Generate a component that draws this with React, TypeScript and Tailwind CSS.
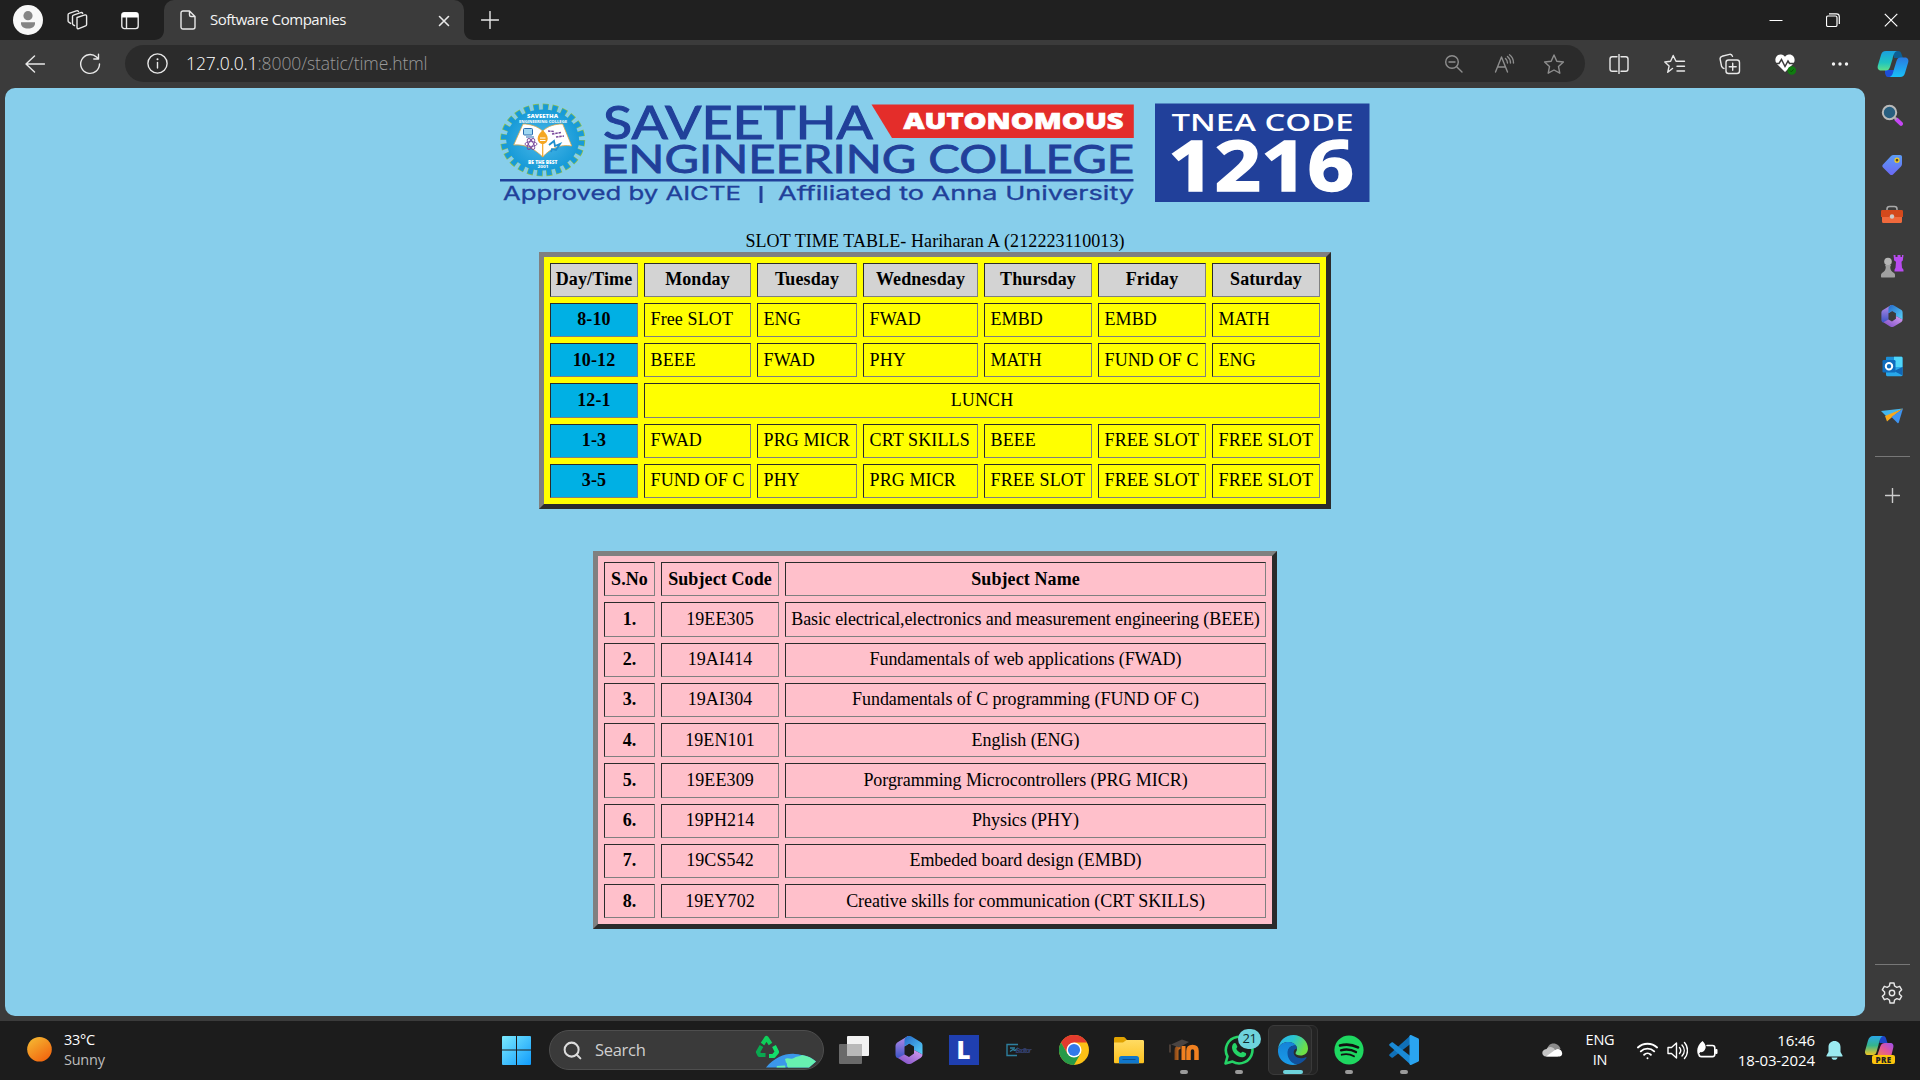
import React from "react";
import { Wifi, Search } from "lucide-react";

const ui = "font-['Open_Sans','Noto_Sans',sans-serif]";

type Box = { w: number; h: number; vb?: string; className?: string; children: React.ReactNode };
const Svg = ({ w, h, vb, className, children }: Box) => (
  <svg width={w} height={h} viewBox={vb ?? `0 0 ${w} ${h}`} fill="none" className={className ?? "block shrink-0"}>
    {children}
  </svg>
);

const line = { stroke: "#e8e8e8", strokeWidth: 1.4, strokeLinecap: "round" as const, strokeLinejoin: "round" as const };
const dim = { ...line, stroke: "#8e8e8e" };

const STAR = "M11 2 L13.8 8.2 L20.4 9 L15.5 13.6 L16.8 20.2 L11 17 L5.2 20.2 L6.5 13.6 L1.6 9 L8.2 8.2 Z";

/* ---------- browser chrome ---------- */

function TitleBar() {
  return (
    <div className="flex h-10 shrink-0 items-stretch bg-[#202020]">
      <div className="flex w-[164px] items-center pl-[13px]">
        <Svg w={30} h={30}>
          <circle cx="15" cy="15" r="15" fill="#f8f8f8" />
          <circle cx="15" cy="10.7" r="4.6" fill="#858585" />
          <path d="M8 17.2h14v1.3c0 3-3 5-7 5s-7-2-7-5z" fill="#858585" />
        </Svg>
        <Svg w={22} h={22} className="ml-[23px] block shrink-0">
          <g {...line}>
            <path d="M11 8.5l8-2.6c.8-.2 1.6.2 1.6 1.2v8.4c0 .7-.4 1.1-1 1.4l-6.8 2.8c-1 .3-1.8-.2-1.8-1.2z" />
            <path d="M8.6 16.6l-1.4-.8c-.5-.3-.7-.7-.7-1.3V7.6c0-.7.4-1.2 1-1.4l7.2-2.6c.8-.3 1.6 0 2 .8" />
            <path d="M4.6 14.4l-1.8-1.2c-.5-.3-.7-.8-.7-1.3V5.8c0-.7.4-1.2 1-1.4l7.2-2.6c.9-.3 1.8 0 2.2.8" />
          </g>
        </Svg>
        <Svg w={18} h={19} className="ml-[33px] block shrink-0">
          <rect x="0.8" y="1.6" width="16.4" height="16" rx="2.5" {...line} />
          <path d="M.8 6.4V4c0-1.6 1-2.4 2.5-2.4h11.4c1.6 0 2.5.8 2.5 2.4v2.4z" fill="#fff" />
          <path d="M5.5 6.4v11" {...line} />
        </Svg>
      </div>
      <div className="relative flex w-[300px] items-center rounded-t-[10px] bg-[#3b3b3b] pl-4">
        <Svg w={10} h={10} className="absolute bottom-0 -left-[10px]"><path d="M10 0v10H0C6 10 10 6 10 0z" fill="#3b3b3b" /></Svg>
        <Svg w={10} h={10} className="absolute bottom-0 -right-[10px]"><path d="M0 0v10h10C4 10 0 6 0 0z" fill="#3b3b3b" /></Svg>
        <Svg w={16} h={20}>
          <path d="M1 3c0-1.3.8-2 2-2h6.5L15 6.500V17c0 1.300-.8 2-2 2H3c-1.200 0-2-.7-2-2zM9.500 1v4c0 1 .6 1.500 1.500 1.500h4" {...line} />
        </Svg>
        <span className={`mb-[2px] ml-[14px] w-[219px] whitespace-nowrap text-[15px] leading-5 tracking-[-0.48px] text-[#f4f4f4] ${ui}`}>Software Companies</span>
        <Svg w={12} h={12} className="ml-[9px] mt-px block shrink-0"><path d="M1.500 1.500l9 9m0-9l-9 9" {...line} strokeWidth={1.600} /></Svg>
      </div>
      <div className="flex flex-1 items-center pl-[17px]">
        <Svg w={18} h={18}><path d="M9 .5v17M.5 9h17" {...line} /></Svg>
      </div>
      <div className="flex w-[158px] items-center">
        <Svg w={14} h={14} className="mb-px ml-[7px] block shrink-0"><path d="M.5 7.500h13" stroke="#fff" /></Svg>
        <Svg w={14} h={14} className="mb-px ml-[43px] block shrink-0">
          <rect x=".5" y="3" width="10.500" height="10.500" rx="1.500" stroke="#fff" strokeWidth="1.200" />
          <path d="M3 .8h7.500c1.800 0 2.800 1 2.800 2.800V11" stroke="#fff" strokeWidth="1.200" />
        </Svg>
        <Svg w={14} h={14} className="mb-px ml-[44px] block shrink-0"><path d="M.8.800l12.500 12.500m0-12.500L.8 13.300" stroke="#fff" strokeWidth="1.200" /></Svg>
      </div>
    </div>
  );
}

function Toolbar() {
  return (
    <div className="flex h-12 shrink-0 bg-[#3b3b3b] pt-[5px]">
      <div className="flex h-[37px] w-[125px] items-center pl-[25px]">
        <Svg w={20} h={18}><path d="M9.500 1L1 9l8.500 8M1 9h18.500" {...line} /></Svg>
        <Svg w={22} h={22} className="ml-[34px] mt-px block shrink-0">
          <path d="M20.500 11a9.400 9.400 0 1 1-3-6.900L19.500 6M19.500 1.300V6h-4.700" {...line} />
        </Svg>
      </div>
      <div className="flex h-[37px] w-[1460px] items-center rounded-full bg-[#2b2b2b] pl-[22px]">
        <Svg w={21} h={21}>
          <circle cx="10.500" cy="10.500" r="9.600" {...line} />
          <path d="M10.500 9.500v5.500" {...line} />
          <circle cx="10.500" cy="6.300" r="1" fill="#eee" />
        </Svg>
        <span className={`mb-px ml-[18px] w-[1259px] whitespace-nowrap text-[17.500px] leading-6 tracking-[-0.1px] text-white ${ui} font-light`}>
          127.0.0.1<span className="text-[#9a9a9a]">:8000/static/time.html</span>
        </span>
        <Svg w={18} h={18}>
          <g {...dim}><circle cx="7" cy="7" r="6.300" /><path d="M11.700 11.700L17 17M4 7h6" /></g>
        </Svg>
        <Svg w={22} h={20} className="ml-[31px] block shrink-0">
          <g {...dim}><path d="M1.500 18L7.500 3l6 15M3.600 13h7.800M11.500 4.500c1.300 1.200 2 2.700 2 4.500M13.500 2.500c1.900 1.600 3 3.600 3 6.500M15.500.8C18 2.700 19.500 5.500 19.500 9" /></g>
        </Svg>
        <Svg w={22} h={22} className="ml-[27px] block shrink-0"><path d={STAR} {...dim} /></Svg>
      </div>
      <div className="flex h-[37px] w-[280px] items-center pl-[24px]">
        <Svg w={20} h={20}>
          <path d="M8 2.800H3.200C1.800 2.800 1 3.600 1 5v10c0 1.400.8 2.200 2.200 2.200H8M12 2.800h4.800c1.400 0 2.200.8 2.200 2.200v10c0 1.400-.8 2.200-2.200 2.200H12M10 .5v19" {...line} />
        </Svg>
        <Svg w={22} h={22} className="ml-[35px] block shrink-0">
          <path d="M8.500 15.500l-4.800 3.800 1.400-6.200L.8 9l5.800-.8L9.200 2.500 12 8.200h8.500M13 13.200h7.500M13 18h7.500" {...line} />
        </Svg>
        <Svg w={22} h={22} className="ml-[33px] block shrink-0">
          <g {...line}>
            <path d="M5 15.500c-1.400-.2-2-.9-2.400-2.200L1.200 6.500C.8 4.800 1.400 3.800 3 3.300l7.500-1.900c1.500-.3 2.500.3 3 2" />
            <rect x="7" y="7" width="13.500" height="13.500" rx="2.500" />
            <path d="M13.700 10.200v7M10.200 13.700h7" />
          </g>
        </Svg>
        <Svg w={22} h={22} className="ml-[33px] block shrink-0">
          <path d="M11 19L2.500 10.500C-.5 6 3 1 7 1.500c2 .2 3.200 1.200 4 2.200.8-1 2-2 4-2.200 4-.5 7.500 4.500 4.500 9z" fill="#fff" />
          <path d="M0 10.500h5l2.500-4 3.500 7 3-5.500 1.500 2.500H22" stroke="#3b3b3b" strokeWidth="1.500" />
          <circle cx="17.800" cy="17.500" r="4.300" fill="#107c10" />
          <path d="M16 17.500l1.300 1.300 2.300-2.400" stroke="#0a4d0a" />
        </Svg>
        <Svg w={18} h={6} className="ml-[35px] block shrink-0">
          <g fill="#f2f2f2"><circle cx="2.500" cy="3" r="1.700" /><circle cx="9" cy="3" r="1.700" /><circle cx="15.500" cy="3" r="1.700" /></g>
        </Svg>
        <Svg w={32} h={28} className="ml-[28px] block shrink-0">
          <defs>
            <linearGradient id="cpA" x1="0" y1="0" x2="0" y2="1"><stop stopColor="#1aa0e0" /><stop offset=".6" stopColor="#20c4c0" /><stop offset="1" stopColor="#5fe08a" /></linearGradient>
            <linearGradient id="cpB" x1="0" y1="0" x2="0" y2="1"><stop stopColor="#2a7ae0" /><stop offset="1" stopColor="#19c0f8" /></linearGradient>
          </defs>
          <path d="M16 1h5c2 0 3 1 3.500 3L26 8h-9z" fill="#0d5f94" />
          <path d="M8 20h10l-3 7h-4c-2 0-2.500-2-3-4z" fill="#1d4fd8" />
          <path d="M9 1h11c-3 1-3.500 4-4.500 8l-2.500 8c-.8 2.500-2 3.500-4 3.500H4C1 20.500 0 18 1 15L4 5c.8-2.700 2-4 5-4z" fill="url(#cpA)" />
          <path d="M23 27H12.500c3-1 3.500-4 4.500-8l2.500-8c.8-2.500 2-3.500 4-3.500H28c3 0 4 2.500 3 5.500l-3 10c-.8 2.700-2 4-5 4z" fill="url(#cpB)" />
        </Svg>
      </div>
    </div>
  );
}

const M365 = ({ size, id }: { size: number; id: string }) => (
  <Svg w={size} h={size} vb="0 0 28 28">
    <defs>
      <linearGradient id={id + "a"} x1="0" y1="0" x2="0" y2="1"><stop stopColor="#b98be8" /><stop offset="1" stopColor="#3a53c5" /></linearGradient>
      <linearGradient id={id + "b"} x1="0" y1="0" x2="1" y2="1"><stop stopColor="#2468c8" /><stop offset="1" stopColor="#58d3fb" /></linearGradient>
      <linearGradient id={id + "c"} x1="0" y1="1" x2="1" y2="0"><stop stopColor="#7a4ac4" /><stop offset="1" stopColor="#d7a0f2" /></linearGradient>
    </defs>
    <path d="M13 0L3 6C1.500 7 .5 8 .5 10v9c0 2.500 2.500 4 4.500 3l4.500-3V10.500L16 6.500z" fill={`url(#${id}a)`} />
    <path d="M12 .5c1.500-.8 3-.8 4.500 0L25.500 6c1.500.9 2 2 2 3.500v9l-8.500-4.500v-3.500L14 7.500l-4.500 3V4c0-1.500 1-2.700 2.500-3.500z" fill={`url(#${id}b)`} />
    <path d="M3 22l6.500-3.500 4.500 2.500 5-3.500V14l8.500 4.500c0 1.500-.8 2.700-2 3.500l-9 5.500c-1.500.8-3.500.8-5 0z" fill={`url(#${id}c)`} />
  </Svg>
);

const SideSlot = ({ children }: { children: React.ReactNode }) => (
  <div className="flex h-[50.200px] w-full shrink-0 items-center justify-center">{children}</div>
);

function Sidebar() {
  return (
    <div className="flex w-[55px] shrink-0 flex-col items-center bg-[#3b3b3b] pt-[2px] pr-px">
      <SideSlot>
        <Svg w={22} h={22}>
          <path d="M15.500 15.500l4.500 4.300" stroke="#c546f5" strokeWidth="4" strokeLinecap="round" />
          <path d="M13 13l2.500 2.500" stroke="#aaa" strokeWidth="2" />
          <circle cx="8.500" cy="8.500" r="6.700" fill="#285f80" stroke="#b9b9b9" strokeWidth="2" />
        </Svg>
      </SideSlot>
      <SideSlot>
        <Svg w={22} h={22}>
          <defs><linearGradient id="tag" x1="0" y1="0" x2="0" y2="1"><stop stopColor="#5b9cf5" /><stop offset="1" stopColor="#6b68f5" /></linearGradient></defs>
          <path d="M12.500 1H19c1.300 0 2 .7 2 2v7c0 1-.3 1.700-1 2.400l-8 8c-1 .9-2 .9-3 0l-7-7c-.9-1-.9-2 0-3L10 2c.7-.7 1.500-1 2.500-1z" fill="url(#tag)" />
          <circle cx="16" cy="6.200" r="2" fill="#5a4a20" stroke="#f5d020" strokeWidth="1.200" />
        </Svg>
      </SideSlot>
      <SideSlot>
        <Svg w={24} h={20}>
          <path d="M7 6V4c0-1.700.8-2.500 2.500-2.500h5C16.200 1.500 17 2.300 17 4v2" stroke="#aaa" strokeWidth="1.500" />
          <path d="M1 6.500C1 5.500 1.500 5 2.500 5h19c1 0 1.500.5 1.500 1.500V12H1z" fill="#d4491c" />
          <path d="M2 12h20v4.500c0 1-.8 1.500-1.800 1.500H3.800c-1 0-1.800-.5-1.800-1.500z" fill="#f0693c" />
          <circle cx="12" cy="11.500" r="2.200" fill="#ccc" />
        </Svg>
      </SideSlot>
      <SideSlot>
        <Svg w={24} h={24}>
          <path d="M13.500 1h2v2h2V1h3v2h1.500V1h1.500l-.7 5.500-1.300 1.300.5 6 1.500 2v1.700h-9v-1.700l1-2 .5-6L14.200 6.500z" fill="#b84bf0" />
          <circle cx="8" cy="7.500" r="3.800" fill="#b5b5b5" />
          <path d="M5 11h6l-.8 2c.2 3 1 4.500 3.800 6 .8.500 1 1.200 1 2v1.500c0 .6-.3 1-1 1H2c-.7 0-1-.4-1-1V21c0-.8.3-1.500 1-2 2.800-1.500 3.600-3 3.800-6z" fill="#a0a0a0" />
        </Svg>
      </SideSlot>
      <SideSlot><M365 size={22} id="s" /></SideSlot>
      <SideSlot>
        <Svg w={21} h={21}>
          <path d="M4 2c0-.8.5-1.200 1.200-1.200h14c.7 0 1.300.4 1.300 1.200v9H4z" fill="#1b8fd8" />
          <path d="M12 .8h7.200c.7 0 1.300.4 1.300 1.200v9H12z" fill="#4fd6fa" />
          <path d="M4 18.800V11h16.500v8c0 .8-.5 1.200-1.300 1.200H5.200C4.500 20.200 4 19.500 4 18.800z" fill="#28a8ea" />
          <path d="M20.500 11v8.500L12 15z" fill="#1066b5" />
          <rect x=".5" y="4" width="13" height="12.500" rx="1.200" fill="#0f6cbd" />
          <circle cx="7" cy="10.300" r="3.200" stroke="#fff" strokeWidth="2" />
        </Svg>
      </SideSlot>
      <SideSlot>
        <Svg w={22} h={18}>
          <path d="M0 4l22-2.500L5.500 9.500z" fill="#43b6ee" />
          <path d="M4 9l18-7.500-12 9.500-4 3.500z" fill="#f7a81b" />
          <path d="M22 1.500L10.500 10l6 6c.5.400 1 .2 1.300-.4z" fill="#3f94f0" />
        </Svg>
      </SideSlot>
      <div className="mt-[15px] h-px w-[35px] bg-[#777]" />
      <Svg w={15} h={15} className="mt-[31px] block shrink-0"><path d="M7.500.5v14M.5 7.500h14" {...line} stroke="#ccc" /></Svg>
      <div className="flex-1" />
      <div className="h-px w-[35px] bg-[#777]" />
      <Svg w={22} h={22} className="mt-[17px] mb-[12px] block shrink-0">
        <path d="M9 1h4l.6 3 2.200 1.300 2.900-1 2 3.500L18.400 10v2.200l2.300 2-2 3.500-2.900-1-2.200 1.300-.6 3H9l-.6-3-2.200-1.300-2.900 1-2-3.500 2.300-2V10l-2.300-2.200 2-3.500 2.900 1L8.400 4z" {...line} />
        <circle cx="11" cy="11" r="2.700" {...line} />
      </Svg>
    </div>
  );
}

/* ---------- page ---------- */

function Banner() {
  return (
    <svg width="890" height="143" viewBox="490 88 890 143" className="block shrink-0">
      <defs>
        <radialGradient id="gearFill"><stop stopColor="#4db8e8" /><stop offset="1" stopColor="#189bd8" /></radialGradient>
      </defs>
      <g>
        <ellipse cx="542.700" cy="140" rx="38.500" ry="32.500" fill="none" stroke="#93c04a" strokeWidth="8" pathLength={96} strokeDasharray="2.500 1.500" />
        <ellipse cx="542.700" cy="140" rx="38" ry="32" fill="none" stroke="#189bd8" strokeWidth="7.500" pathLength={96} strokeDasharray="2.100 1.900" strokeDashoffset="-.2" />
        <ellipse cx="542.700" cy="140" rx="36.500" ry="30.500" fill="url(#gearFill)" />
        <text x="527" y="117.500" textLength="31" lengthAdjust="spacingAndGlyphs" fontSize="5" fontWeight="800" fill="#fff" fontFamily="Open Sans">SAVEETHA</text>
        <text x="519" y="123" textLength="48" lengthAdjust="spacingAndGlyphs" fontSize="3.500" fontWeight="700" fill="#fff" fontFamily="Open Sans">ENGINEERING COLLEGE</text>
        <path d="M523 124c7 0 14 2 19.700 7 5.500-5 12-7 20-7l9 22c-11-2-21 2-29 11-8-8-17-13-29-12z" fill="#fff" stroke="#e0a94a" strokeWidth=".8" />
        <path d="M542.700 131v26" stroke="#f5a623" strokeWidth="1.200" />
        <path d="M542.700 130c3 3 5 5.500 5 8.500s-2 5.500-5 5.500-5-2.500-5-5.500 2-5.500 5-8.500z" fill="#f5a623" />
        <path d="M540 138h5.500M540 140.500h5.500" stroke="#fff" />
        <rect x="523.500" y="128.500" width="9" height="6.500" rx="1" fill="#9fd8f2" stroke="#2b6cb0" />
        <path d="M526 137h8" stroke="#2b6cb0" strokeWidth="1.200" />
        <g fill="none" stroke="#7a4a9c" strokeWidth=".9">
          <ellipse cx="531" cy="144" rx="6" ry="2.400" />
          <ellipse cx="531" cy="144" rx="6" ry="2.400" transform="rotate(60 531 144)" />
          <ellipse cx="531" cy="144" rx="6" ry="2.400" transform="rotate(120 531 144)" />
        </g>
        <path d="M548 131l6 .5M552 134l9-1.500M556 137l8-1" stroke="#7a4a9c" strokeWidth="1.600" strokeDasharray="2.500 .8" />
        <path d="M549 145l5-4 1 5 5-2-4 6-4-1-1 3" stroke="#1f8fd0" strokeWidth="1.800" fill="none" />
        <text x="528" y="163.500" textLength="29.500" lengthAdjust="spacingAndGlyphs" fontSize="4.500" fontWeight="800" fill="#fff" fontFamily="Open Sans">BE THE BEST</text>
        <text x="537.500" y="168" textLength="11" lengthAdjust="spacingAndGlyphs" fontSize="3.500" fontWeight="700" fill="#fff" fontFamily="Open Sans">2001</text>
      </g>
      <g fill="#21409a">
        <text x="603" y="139" textLength="270" lengthAdjust="spacingAndGlyphs" fontSize="47" fontFamily="Lato" stroke="#21409a" strokeWidth="1">SAVEETHA</text>
        <text x="601" y="172.700" textLength="533" lengthAdjust="spacingAndGlyphs" fontSize="38.500" fontFamily="Lato" stroke="#21409a" strokeWidth=".8">ENGINEERING COLLEGE</text>
        <rect x="500" y="179" width="633.500" height="2.500" />
        <text x="503" y="200" textLength="238" lengthAdjust="spacingAndGlyphs" fontSize="19" fontFamily="Inter" stroke="#21409a" strokeWidth=".3">Approved by AICTE</text>
        <rect x="759.500" y="186" width="3" height="17" />
        <text x="778" y="200" textLength="356" lengthAdjust="spacingAndGlyphs" fontSize="19" fontFamily="Inter" stroke="#21409a" strokeWidth=".3">Affiliated to Anna University</text>
        <rect x="1155" y="103.500" width="214.500" height="98.500" />
      </g>
      <path d="M871.500 104.500h262.300V138H892z" fill="#e42d2a" />
      <g fill="#fff">
        <text x="903.500" y="129" textLength="220" lengthAdjust="spacingAndGlyphs" fontSize="23" fontWeight="800" fontFamily="Open Sans" stroke="#fff" strokeWidth=".7">AUTONOMOUS</text>
        <text x="1171.500" y="131" textLength="182" lengthAdjust="spacingAndGlyphs" fontSize="24" fontWeight="600" fontFamily="Open Sans">TNEA CODE</text>
        <text x="1168" y="190.800" textLength="186" lengthAdjust="spacingAndGlyphs" fontSize="70" fontWeight="700" fontFamily="Open Sans" stroke="#fff" strokeWidth="1.500">1216</text>
      </g>
    </svg>
  );
}

const edge = "border-t-[#2b2b2b] border-l-[#2b2b2b] border-r-[#808080] border-b-[#808080]";
const outer = "border-[5px] border-t-[#808080] border-l-[#808080] border-r-[#2b2b2b] border-b-[#2b2b2b]";
const head = ["Day/Time", "Monday", "Tuesday", "Wednesday", "Thursday", "Friday", "Saturday"];
const slots: [string, string, string[]][] = [
  ["8-10", "pb-[2px]", ["Free SLOT", "ENG", "FWAD", "EMBD", "EMBD", "MATH"]],
  ["10-12", "pb-0", ["BEEE", "FWAD", "PHY", "MATH", "FUND OF C", "ENG"]],
  ["12-1", "pb-px", ["LUNCH"]],
  ["1-3", "pb-[2px]", ["FWAD", "PRG MICR", "CRT SKILLS", "BEEE", "FREE SLOT", "FREE SLOT"]],
  ["3-5", "pb-[2px]", ["FUND OF C", "PHY", "PRG MICR", "FREE SLOT", "FREE SLOT", "FREE SLOT"]],
];
const subjects = [
  ["19EE305", "Basic electrical,electronics and measurement engineering (BEEE)", "pb-px"],
  ["19AI414", "Fundamentals of web applications (FWAD)", "pb-[2px]"],
  ["19AI304", "Fundamentals of C programming (FUND OF C)", "pb-[2px]"],
  ["19EN101", "English (ENG)", "pb-0"],
  ["19EE309", "Porgramming Microcontrollers (PRG MICR)", "pb-px"],
  ["19PH214", "Physics (PHY)", "pb-[2px]"],
  ["19CS542", "Embeded board design (EMBD)", "pb-[2px]"],
  ["19EY702", "Creative skills for communication (CRT SKILLS)", "pb-0"],
];

const Cell = ({ className = "", children }: { className?: string; children: React.ReactNode }) => (
  <div className={`flex items-center whitespace-nowrap border ${edge} ${className}`}>{children}</div>
);

function Page() {
  return (
    <main className="flex w-[1860px] flex-col items-center overflow-hidden rounded-[10px] bg-[#87ceeb] font-['Liberation_Serif','Times_New_Roman',serif] text-[18px] leading-5 text-black">
      <Banner />
      <div className="h-[21px] leading-[21px] tracking-[0.09px]">SLOT TIME TABLE- Hariharan A (212223110013)</div>
      <div className={`grid w-[792px] grid-cols-[88px_107px_100px_115px_108px_108px_108px] grid-rows-[34px_34px_34px_35px_34px_34px] gap-1.5 bg-[#ffff00] p-1.5 tracking-[0.12px] ${outer}`}>
        {head.map((h) => (
          <Cell key={h} className="justify-center bg-[#d3d3d3] pb-[2px] font-bold">{h}</Cell>
        ))}
        {slots.map(([time, pb, cells]) => (
          <React.Fragment key={time}>
            <Cell className={`justify-center bg-[#00b0e4] font-bold ${pb}`}>{time}</Cell>
            {cells.map((c, i) => (
              <Cell key={i} className={`${pb} ${cells.length === 1 ? "col-span-6 justify-center" : "pl-[5.500px]"}`}>{c}</Cell>
            ))}
          </React.Fragment>
        ))}
      </div>
      <div className={`mt-[42px] grid w-[684px] grid-cols-[51px_118px_481px] grid-rows-[34px_35px_34px_34px_34px_35px_34px_34px_34px] gap-1.5 bg-[#ffc0cb] p-1.5 ${outer}`}>
        {["S.No", "Subject Code", "Subject Name"].map((h) => (
          <Cell key={h} className="justify-center font-bold tracking-[0.1px]">{h}</Cell>
        ))}
        {subjects.map(([code, name, pb], i) => (
          <React.Fragment key={code}>
            <Cell className={`justify-center font-bold ${pb}`}>{i + 1}.</Cell>
            <Cell className={`justify-center tracking-[0.1px] ${pb}`}>{code}</Cell>
            <Cell className={`justify-center ${i === 0 ? "tracking-[-0.1px]" : "tracking-[-0.05px]"} ${pb}`}>{name}</Cell>
          </React.Fragment>
        ))}
      </div>
    </main>
  );
}

/* ---------- taskbar ---------- */

const App55 = ({ mark, children }: { mark?: boolean; children: React.ReactNode }) => (
  <div className="relative flex h-[58px] w-[55px] shrink-0 items-center justify-center">
    {children}
    {mark && <span className="absolute bottom-[5px] left-[23.500px] h-1 w-2 rounded-full bg-[#9a9a9a]" />}
  </div>
);

function Taskbar() {
  return (
    <div className={`flex h-[59px] shrink-0 bg-[#1c1c1c] text-white ${ui}`}>
      <div className="flex w-[501px] items-center pl-[27px]">
        <Svg w={25} h={25} className="mb-[2px] block shrink-0">
          <defs><linearGradient id="sun" x1="0" y1="0" x2=".7" y2="1"><stop stopColor="#f5bf35" /><stop offset="1" stopColor="#f2660f" /></linearGradient></defs>
          <circle cx="12.500" cy="12.300" r="12.300" fill="url(#sun)" />
        </Svg>
        <div className="mb-[2px] ml-3 text-[14.500px] leading-5 tracking-[-0.25px]">
          <div>33°C</div>
          <div className="text-[#bdbdbd]">Sunny</div>
        </div>
      </div>
      <div className="flex w-[48px] items-center">
        <Svg w={30} h={30} className="mb-px block shrink-0">
          <defs><linearGradient id="win" x1="0" y1="0" x2="1" y2="1"><stop stopColor="#7beafe" /><stop offset="1" stopColor="#109bfb" /></linearGradient></defs>
          <path d="M1 2q0-1 1-1h13v13.500H1zM16 1h13q1 0 1 1v12.500H16zM1 15.500h14V30H2q-1 0-1-1zM16 15.500h14V29q0 1-1 1H16z" fill="url(#win)" />
        </Svg>
      </div>
      <div className="mt-[9px] flex h-10 w-[275px] items-center overflow-hidden rounded-full border border-[#4e4e4e] bg-[#3a3a3a] pl-[12px]">
        <Search size={21} color="#dcdcdc" strokeWidth={2.300} />
        <span className="ml-3 w-[160px] text-[16.500px] tracking-[-0.3px] text-[#cfcfcf]">Search</span>
        <Svg w={64} h={38}>
          <g stroke="#0fcf5a" strokeWidth="4.200" strokeLinejoin="round">
            <path d="M7.500 13L11.500 7l4 6" />
            <path d="M19 15l3 6-3.500 4H14" stroke="#12e06a" />
            <path d="M10.500 24H4.500L3 21l3.500-6" stroke="#0aa850" />
          </g>
          <path d="M11 36.500C20 26 31 22 40 23c9 .8 16 3 21 7.500l-7 6z" fill="#3b97ea" />
          <path d="M30 28c3-2 6 1 9-1 2-2 5-1 8-3 6 1 10 3 14 6.500l-7 6H33c-2-2 0-4-2-5zM22 35l8-.5.5 2h-9z" fill="#67f0b0" />
        </Svg>
      </div>
      <div className="flex flex-1 pl-[2px]">
        <App55>
          <Svg w={30} h={29}>
            <rect x="8" y="0" width="22" height="20" rx="1" fill="#f2f2f2" />
            <rect x="0" y="8" width="23" height="20" rx="1" fill="#6a6a6a" />
            <rect x="8" y="8" width="15" height="12" fill="#b9b9b9" />
          </Svg>
        </App55>
        <App55><M365 size={28} id="t" /></App55>
        <App55>
          <div className="flex h-[30px] w-[30px] items-center justify-center bg-[#1f3fb0] text-[24px] font-extrabold leading-none">L</div>
        </App55>
        <App55>
          <Svg w={28} h={14}>
            <path d="M13 1.500H2v11h10M5 5h5M5 8.500l3-2 2 1 3-2.500" stroke="#2d7f9e" strokeWidth="1.400" />
            <text x="10.500" y="10" fontSize="7" fill="#34406e" fontWeight="700" fontStyle="italic" textLength="16" fontFamily="Open Sans">Eeditor</text>
          </Svg>
        </App55>
        <App55>
          <Svg w={30} h={30} vb="0 0 48 48">
            <circle cx="24" cy="24" r="24" fill="#fbc116" />
            <path d="M3.200 12A24 24 0 0 1 44.800 12H24L13.600 30z" fill="#e33b2e" />
            <path d="M3.200 12A24 24 0 0 0 24 48L34.400 30H13.600z" fill="#269a48" />
            <circle cx="24" cy="24" r="12" fill="#fff" />
            <circle cx="24" cy="24" r="9.700" fill="#3279ea" />
          </Svg>
        </App55>
        <App55>
          <Svg w={30} h={28}>
            <defs><linearGradient id="fold" x1="0" y1="0" x2="0" y2="1"><stop stopColor="#ffdb63" /><stop offset="1" stopColor="#fcc11e" /></linearGradient></defs>
            <path d="M0 2.500C0 1.500.8 1 1.500 1h8c.7 0 1.200.2 1.600.7L13 4v6H0z" fill="#e0a200" />
            <path d="M0 6.500h9l3.500-2.500H28.500c1 0 1.500.6 1.500 1.500v20.500c0 .8-.6 1.300-1.500 1.300h-27C.6 27.300 0 26.800 0 26z" fill="url(#fold)" />
            <path d="M5 27.500v-5C5 21 5.800 20 7.500 20h15c1.700 0 2.500 1 2.500 2.500v5z" fill="#1077cc" />
            <path d="M8.500 23.500h13" stroke="#0b4f8f" />
          </Svg>
        </App55>
        <App55 mark>
          <Svg w={31} h={22}>
            <defs><linearGradient id="mo" gradientUnits="userSpaceOnUse" x1="5" y1="0" x2="14" y2="0"><stop stopColor="#6a3a18" /><stop offset="1" stopColor="#f08020" /></linearGradient></defs>
            <path d="M8.500 21v-9.500c0-2.500 1.800-3.500 4-3.500" stroke="url(#mo)" strokeWidth="4" />
            <path d="M15.500 21V7" stroke="#f08020" strokeWidth="4" />
            <path d="M20.500 21v-9c0-2.500 1.500-4 4-4s4 1.500 4 4v9" stroke="#f08020" strokeWidth="4.500" />
            <path d="M3 5.500L14 .5l7 2.500-10 5.500z" fill="#4a4442" />
            <path d="M2 5.500v8" stroke="#5a4a40" strokeWidth="1.500" />
          </Svg>
        </App55>
        <App55 mark>
          <Svg w={30} h={30}>
            <path d="M1.500 28.500l2-7A13.300 13.300 0 1 1 8.500 26.600z" stroke="#25d366" strokeWidth="2.600" strokeLinejoin="round" />
            <path d="M9.500 8.500c.8-.9 2-.8 2.500.2l1.300 2.800c.3.700-.8 1.800-1 2.200.8 2 2.500 3.500 4.600 4.300.6-.3 1.300-1.500 2-1.200l2.700 1.300c.9.500.6 1.800 0 2.600-3 3.500-8 .8-10.500-1.700-2.500-2.500-4.600-7.300-1.600-10.500z" fill="#25d366" />
          </Svg>
          <span className="absolute left-[27px] top-[8px] flex h-5 w-[23px] items-center justify-center rounded-full bg-[#6ed3dc] text-[13px] tracking-[-0.5px] text-[#10282b]">21</span>
        </App55>
        <App55>
          <span className="absolute left-[4px] top-[4px] h-[50px] w-[48px] rounded-md border border-[#333] bg-[#232323]" />
          <span className="absolute left-[2px] top-[4px] h-[50px] w-[44px] rounded-md border border-[#3a3a3a] bg-[#2b2b2b]" />
          <Svg w={30} h={30} className="relative left-[-0.500px] block shrink-0">
            <defs>
              <linearGradient id="eg" x1="0" y1="0" x2="1" y2=".4"><stop stopColor="#2cb4f0" /><stop offset=".5" stopColor="#2ac4d0" /><stop offset="1" stopColor="#6de046" /></linearGradient>
              <linearGradient id="eb" x1="0" y1="0" x2="0" y2="1"><stop stopColor="#1583d8" /><stop offset="1" stopColor="#1a9be8" /></linearGradient>
            </defs>
            <path d="M0 14C1 5.500 7.500 0 15.500 0 24 0 30 6.500 30 13.500c0 4.500-3.500 7-7.500 7-3 0-5-1-5-2.200s1.500-1.800 1.500-4.500C19 10 15 7 10.500 7 5.500 7 1.500 9.500 0 14z" fill="url(#eg)" />
            <path d="M0 14C1.500 9.500 5.500 7 10.500 7c3.500 0 6 1.500 7.500 3.500-5-.5-8 2.500-8 7 0 6 4 11 9.500 11.800C10 32-1 26 0 14z" fill="url(#eb)" />
            <path d="M18 10.500c-5-.5-8.500 2.500-8.500 7.500 0 6 4.500 11.500 10.500 11.200 3.500-1 6.500-3.200 8.500-6.200.3-.6-.2-1-.8-.7-6 2.500-12.500-.5-12-5.300.2-2.500 1.800-3 3.200-3.500 0-1.200-.3-2.200-.9-3z" fill="#10509c" />
          </Svg>
          <span className="absolute bottom-[5px] left-[17px] h-1 w-5 rounded-full bg-[#6ed3dc]" />
        </App55>
        <App55 mark>
          <Svg w={30} h={30}>
            <circle cx="15" cy="15" r="14.600" fill="#1ed760" />
            <g stroke="#111" strokeLinecap="round"><path d="M6 10.500c6-1.700 12.500-1 18 1.900" strokeWidth="2.700" /><path d="M7 15.300c5-1.400 10.500-.8 15 1.800" strokeWidth="2.300" /><path d="M7.700 19.700c4.300-1.100 8.500-.6 12.300 1.600" strokeWidth="1.900" /></g>
          </Svg>
        </App55>
        <App55 mark>
          <Svg w={30} h={30}>
            <path d="M22 0v8.500L4 22.500c-.5.400-1 .4-1.500 0L.6 21c-.6-.5-.6-1.200 0-1.700z" fill="#1070b8" />
            <path d="M22 30v-8.500L4 7.500c-.5-.4-1-.4-1.500 0L.6 9c-.6.500-.6 1.200 0 1.700z" fill="#1a8ad6" />
            <path d="M22 0l7 3.200c.6.300 1 .8 1 1.500v20.600c0 .7-.4 1.200-1 1.500L22 30c-1 .2-1.500-.5-1.500-1.200V1.200C20.500.500 21 -.2 22 0z" fill="#2aa4f0" />
          </Svg>
        </App55>
      </div>
      <div className="flex w-[378px] items-center pb-px">
        <Svg w={21} h={14} className="block shrink-0">
          <path d="M5 8C5 3 8 .5 11.500.5S18 3 18.500 6z" fill="#8b8b8b" />
          <path d="M4 13.500c-5-.3-5-7 .5-7.500C6 3.500 11 3 13 7l3 6.500z" fill="#c4c4c4" />
          <path d="M4 13.500L13 7c3-2 6.500-.5 7 2.500.8 2.500-1 4-3 4z" fill="#fff" />
        </Svg>
        <div className="ml-[20px] w-[34px] text-center text-[14.500px] leading-5 tracking-[-0.25px]"><div>ENG</div><div>IN</div></div>
        <Wifi size={23} strokeWidth={2} className="ml-[19px] shrink-0" />
        <Svg w={21} h={19} className="ml-[8px] block shrink-0">
          <path d="M1 6.500h3.500L9.500 2v15l-5-4.500H1zM12.500 6.500c1.500 1.800 1.500 4.200 0 6M15 4c3 3.300 3 7.700 0 11M17.500 1.500c4 4.500 4 11.500 0 16" {...line} stroke="#fff" />
        </Svg>
        <Svg w={21} h={18} className="ml-[9px] block shrink-0">
          <path d="M10 4.500h5.500c1.500 0 2.300.8 2.300 2.300v6.500c0 1.500-.8 2.300-2.300 2.300H4.500C3 15.600 2 15 2 13.500" {...line} stroke="#fff" strokeWidth={1.600} />
          <rect x="18" y="8" width="2.500" height="5" rx="1" fill="#fff" />
          <path d="M5.500 0c3 3 4 6 2.500 8.500-1.200 2.300-2.500 2.800-4.500 2.600L1 14C-.8 9 .5 4 5.500 0z" fill="#fff" />
        </Svg>
        <div className="ml-[15px] w-[82px] whitespace-nowrap text-right text-[15px] leading-5 tracking-[-0.1px]"><div>16:46</div><div>18-03-2024</div></div>
        <Svg w={17} h={19} className="ml-[11px] block shrink-0">
          <path d="M8.500 0C12 0 14.500 2.500 14.500 6v5l2 3.500c.2.600 0 1-.6 1H1.100c-.6 0-.8-.4-.6-1l2-3.500V6c0-3.500 2.500-6 6-6zM5.500 16.500h6c-.3 1.500-1.300 2.300-3 2.300s-2.700-.8-3-2.300z" fill="#9beaf0" />
        </Svg>
        <div className="relative ml-[22px] h-7 w-[30px] shrink-0">
          <Svg w={29} h={24}>
            <defs>
              <linearGradient id="pa" x1="0" y1="0" x2="0" y2="1"><stop stopColor="#2aa8e8" /><stop offset=".5" stopColor="#35b58c" /><stop offset="1" stopColor="#f2c522" /></linearGradient>
              <linearGradient id="pb" x1="0" y1="1" x2="1" y2="0"><stop stopColor="#f08050" /><stop offset=".5" stopColor="#e0559c" /><stop offset="1" stopColor="#9a50f0" /></linearGradient>
            </defs>
            <path d="M14 0h4c2.500 0 3 2 3.500 4l1 3h-8z" fill="#1c46c8" />
            <path d="M8 0h10c-3 1-3.500 5-4.500 9l-2 7c-.6 2-1.500 3-3.500 3H3c-2.500 0-3.500-2-2.800-4.500L3 4.500C4 1.500 5.500 0 8 0z" fill="url(#pa)" />
            <path d="M20 7h5c3 0 4 2 3.200 5l-2 8H12l3.500-10c.8-2 2-3 4.500-3z" fill="url(#pb)" />
          </Svg>
          <span className="absolute bottom-0 left-[7px] flex h-[9px] w-[23px] items-center justify-center rounded-[2px] bg-[#fcc40c] text-[8px] font-extrabold not-italic tracking-[0.4px] text-[#222]">PRE</span>
        </div>
      </div>
    </div>
  );
}

export default function App() {
  return (
    <div className="flex h-[1080px] w-[1920px] flex-col overflow-hidden bg-[#3b3b3b]">
      <TitleBar />
      <Toolbar />
      <div className="flex h-[928px] shrink-0 pl-[5px]">
        <Page />
        <Sidebar />
      </div>
      <div className="h-[5px] shrink-0 bg-[#3b3b3b]" />
      <Taskbar />
    </div>
  );
}
